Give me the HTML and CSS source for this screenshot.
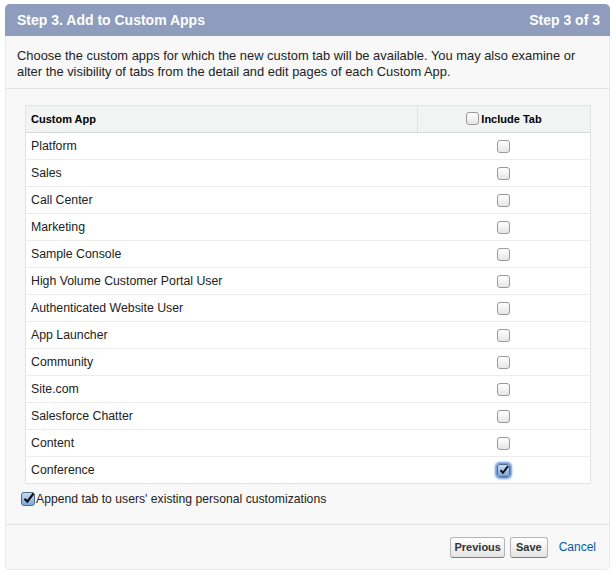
FILE: index.html
```html
<!DOCTYPE html>
<html>
<head>
<meta charset="utf-8">
<link rel="stylesheet" href="styles.css">
</head>
<body>
<div class="panel">
  <div class="head">
    <span class="title">Step 3. Add to Custom Apps</span>
    <span class="step">Step 3 of 3</span>
  </div>
  <p class="desc">Choose the custom apps for which the new custom tab will be available. You may also examine or alter the visibility of tabs from the detail and edit pages of each Custom App.</p>
  <div class="body">
    <table class="grid">
      <thead>
        <tr><th class="c1">Custom App</th><th class="c2"><span class="cb hcb"></span>Include Tab</th></tr>
      </thead>
      <tbody>
        <tr><td>Platform</td><td class="cc"><span class="cb"></span></td></tr>
        <tr><td>Sales</td><td class="cc"><span class="cb"></span></td></tr>
        <tr><td>Call Center</td><td class="cc"><span class="cb"></span></td></tr>
        <tr><td>Marketing</td><td class="cc"><span class="cb"></span></td></tr>
        <tr><td>Sample Console</td><td class="cc"><span class="cb"></span></td></tr>
        <tr><td>High Volume Customer Portal User</td><td class="cc"><span class="cb"></span></td></tr>
        <tr><td>Authenticated Website User</td><td class="cc"><span class="cb"></span></td></tr>
        <tr><td>App Launcher</td><td class="cc"><span class="cb"></span></td></tr>
        <tr><td>Community</td><td class="cc"><span class="cb"></span></td></tr>
        <tr><td>Site.com</td><td class="cc"><span class="cb"></span></td></tr>
        <tr><td>Salesforce Chatter</td><td class="cc"><span class="cb"></span></td></tr>
        <tr><td>Content</td><td class="cc"><span class="cb"></span></td></tr>
        <tr><td>Conference</td><td class="cc"><span class="cb on focus"><svg viewBox="0 0 12 12" width="12" height="12"><path d="M2.5 6.2 L5 8.8 L10 2.2" fill="none" stroke="#111" stroke-width="2"/></svg></span></td></tr>
      </tbody>
    </table>
    <label class="append"><span class="cb on big"><svg viewBox="0 0 13 13" width="13" height="13"><path d="M2.5 6.8 L5.3 9.6 L11.5 1.5" fill="none" stroke="#111" stroke-width="2.2"/></svg></span>Append tab to users' existing personal customizations</label>
  </div>
  <div class="foot">
    <button class="btn">Previous</button>
    <button class="btn">Save</button>
    <a class="cancel">Cancel</a>
  </div>
</div>
</body>
</html>
```

FILE: styles.css
```css
html, body { margin: 0; padding: 0; background: #ffffff; }
body { font-family: "Liberation Sans", Arial, sans-serif; font-size: 13px; color: #222; }
.panel {
  margin: 4px 6px 0 5px;
  width: 605px;
  height: 566px;
  box-sizing: border-box;
  background: #f8f8f8;
  border: 1px solid #eaeaea;
  border-top: none;
  border-radius: 5px;
  display: flex;
  flex-direction: column;
}
.head {
  background: #8e9dbe;
  height: 32px;
  flex: none;
  border-radius: 5px 5px 0 0;
  display: flex;
  align-items: center;
  justify-content: space-between;
  padding: 0 10px 0 12px;
  color: #fff;
  font-weight: bold;
  font-size: 14px;
  margin: 0 -1px;
}
.desc {
  margin: 0;
  padding: 12px 12px 8px 11px;
  line-height: 16px;
  border-bottom: 1px solid #e2e2e2;
  color: #222;
  font-size: 12.9px;
}
.body { padding: 16px 19px 0 19px; flex: 1; border-bottom: 1px solid #e2e2e2; }
.grid {
  width: 566px;
  border-collapse: collapse;
  background: #fff;
  border: 1px solid #e0e3e5;
}
.grid th {
  background: #f2f3f3;
  height: 26px;
  font-size: 11px;
  font-weight: bold;
  color: #000;
  text-align: left;
  border-bottom: 1px solid #d4dadc;
  padding: 0 5px;
}
.grid th.c1 { width: 381px; border-right: 1px solid #e0e3e5; }
.grid th.c2 { text-align: center; }
.grid td {
  height: 26px;
  padding: 0 5px;
  border-bottom: 1px solid #ececec;
  color: #222;
  font-size: 12.3px;
}
.grid tr:last-child td { border-bottom: none; }
.grid td.cc { text-align: center; }
.cb {
  display: inline-block;
  width: 11px;
  height: 11px;
  border: 1px solid #9a9a9a;
  border-radius: 3px;
  background: linear-gradient(#ffffff, #e6e6e6);
  vertical-align: middle;
  box-sizing: content-box;
  position: relative;
}
.cb svg { position: absolute; left: 0; top: -1px; }
.cb.big { width: 12px; height: 12px; }
.hcb { margin-right: 2px; margin-top: -2px; }
.cb.on { background: linear-gradient(#c9dcf3, #7fa8dc); border-color: #4a6a96; }
.cb.focus { box-shadow: 0 0 2px 2px #6b97d8; }
.append {
  display: flex;
  align-items: center;
  margin-top: 7px;
  margin-left: -4px;
  font-size: 12.2px;
  line-height: 16px;
  color: #222;
}
.append .cb { margin-right: 1px; }
.foot {
  height: 44px;
  flex: none;
  display: flex;
  align-items: center;
  justify-content: flex-end;
  padding: 0 13px 0 0;
}
.btn {
  font-family: "Liberation Sans", Arial, sans-serif;
  font-size: 11px;
  font-weight: bold;
  color: #333;
  height: 21px;
  padding: 0 3px;
  margin-left: 5px;
  border: 1px solid #b5b5b5;
  border-bottom-color: #7f7f7f;
  border-radius: 3px;
  background: linear-gradient(#ffffff, #e4e4e4);
}
.btn + .btn { padding: 0 5px; }
.cancel { color: #015ba7; font-size: 12px; margin-left: 11px; }
```
